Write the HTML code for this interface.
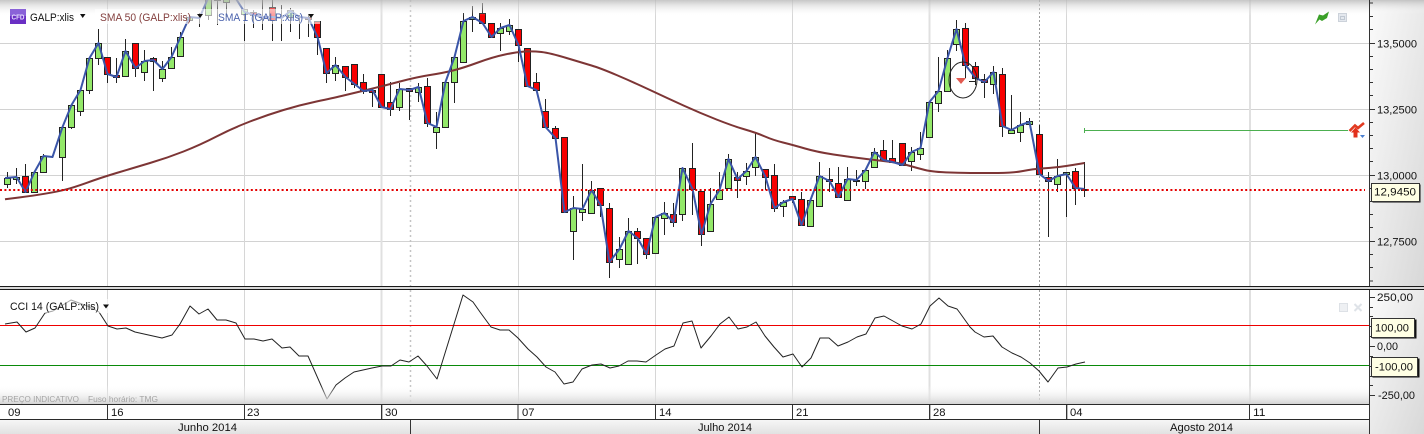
<!DOCTYPE html>
<html><head><meta charset="utf-8"><style>
html,body{margin:0;padding:0;background:#fff}
svg{display:block;filter:blur(.35px)}
text{font-family:"Liberation Sans",sans-serif;font-size:11px;fill:#111}
</style></head><body>
<svg width="1424" height="434" viewBox="0 0 1424 434" xmlns="http://www.w3.org/2000/svg">
<defs>
<linearGradient id="top" x1="0" y1="0" x2="0" y2="1"><stop offset="0" stop-color="#b8b8b8" stop-opacity=".8"/><stop offset="1" stop-color="#fff" stop-opacity="0"/></linearGradient>
<linearGradient id="bot" x1="0" y1="0" x2="0" y2="1"><stop offset="0" stop-color="#fff" stop-opacity="0"/><stop offset="1" stop-color="#d4d4d4"/></linearGradient>
<linearGradient id="axis" x1="0" y1="0" x2="1" y2="1"><stop offset="0" stop-color="#fbfbfb"/><stop offset="1" stop-color="#d8d8d8"/></linearGradient>
<linearGradient id="mon" x1="0" y1="0" x2="0" y2="1"><stop offset="0" stop-color="#f6f6f6"/><stop offset="1" stop-color="#e2e2e2"/></linearGradient>
</defs>
<rect width="1424" height="434" fill="#fff"/>
<!-- grid -->
<path d="M0 43.5H1369M0 109.5H1369M0 175.5H1369M0 241.5H1369" stroke="#d2d2d2" fill="none"/>
<path d="M107.5 0V286M244.5 0V286M518.5 0V286M655.5 0V286M792.5 0V286M1066.5 0V286M107.5 290V405M244.5 290V405M518.5 290V405M655.5 290V405M792.5 290V405M1066.5 290V405" stroke="#d6d6d6" fill="none"/>
<path d="M381.5 0V286M929.5 0V286M1250 0V286M381.5 290V405M929.5 290V405M1250 290V405" stroke="#e0e0e0" stroke-width="2" fill="none"/>
<path d="M410.5 0V286M410.5 290V404" stroke="#c4c4c4" stroke-width="1.5" stroke-dasharray="2 3" fill="none"/>
<path d="M1039.5 0V286M1039.5 290V404" stroke="#999" stroke-dasharray="2 2" fill="none"/>
<!-- wicks -->
<path stroke="#222" fill="none" d="M7.5 172V188M16.5 168V184M25.5 164V192M43.5 154V172M52.5 155V158M62.5 127V181M71.5 105V129M80.5 90V116M89.5 58V94M98.5 29V65M107.5 57V83M116.5 58V83M125.5 39V76M135.5 43V77M144.5 50V81M153.5 57V91M162.5 61V82M171.5 47V68M180.5 32V56M189.5 15V22M199.5 13V27M208.5 0V20M217.5 0V25M226.5 0V17M244.5 9V41M253.5 10V28M262.5 0V30M272.5 0V41M281.5 5V41M290.5 8V32M299.5 15V39M308.5 15V37M317.5 21V55M326.5 48V83M335.5 57V81M345.5 66V91M354.5 64V88M363.5 74V94M372.5 90V107M390.5 82V116M399.5 83V111M409.5 88V120M418.5 83V102M427.5 78V127M436.5 112V149M454.5 57V103M463.5 13V62M472.5 6V32M482.5 3V23M491.5 23V37M500.5 23V51M509.5 19V35M518.5 29V62M536.5 73V90M545.5 99V127M555.5 126V138M573.5 196V260M582.5 164V221M591.5 181V214M600.5 188V217M609.5 203V278M619.5 237V268M628.5 218V264M637.5 228V264M646.5 238V259M664.5 202V235M673.5 203V227M682.5 168V221M692.5 143V215M701.5 191V246M710.5 188V231M719.5 172V199M728.5 154V188M737.5 172V198M746.5 163V185M755.5 132V176M765.5 169V190M774.5 164V212M783.5 200V217M792.5 196V203M801.5 192V225M819.5 162V206M829.5 168V192M838.5 167V197M847.5 167V200M856.5 170V186M865.5 170V189M874.5 148V168M883.5 140V160M892.5 140V162M902.5 143V165M911.5 147V171M920.5 132V160M929.5 102V137M938.5 57V112M947.5 50V91M956.5 20V51M965.5 23V78M975.5 62V78M984.5 74V98M993.5 66V94M1002.5 68V137M1011.5 95V133M1020.5 112V142M1029.5 118V125M1039.5 125V174M1048.5 172V237M1057.5 159V192M1066.5 172V217M1075.5 168V205M1084.5 162V197M1081 189.5H1088"/>
<!-- green bodies -->
<path fill="#93e869" stroke="#222" d="M4.5 178.5h6v6h-6zM13.5 177.5h6v2h-6zM31.5 172.5h6v20h-6zM40.5 156.5h6v16h-6zM59.5 127.5h6v30h-6zM68.5 105.5h6v22h-6zM77.5 90.5h6v21h-6zM86.5 58.5h6v32h-6zM95.5 43.5h6v15h-6zM122.5 51.5h6v25h-6zM141.5 61.5h6v11h-6zM159.5 69.5h6v9h-6zM168.5 57.5h6v11h-6zM177.5 37.5h6v19h-6zM186.5 17.5h6v3h-6zM205.5 -5.5h6v21h-6zM223.5 -5.5h6v8h-6zM241.5 9.5h6v5h-6zM287.5 10.5h6v7h-6zM332.5 65.5h6v8h-6zM396.5 89.5h6v18h-6zM415.5 87.5h6v5h-6zM433.5 127.5h6v5h-6zM442.5 82.5h6v45h-6zM451.5 57.5h6v25h-6zM460.5 21.5h6v41h-6zM469.5 17.5h6v2h-6zM497.5 28.5h6v5h-6zM506.5 25.5h6v6h-6zM570.5 208.5h6v23h-6zM579.5 209.5h6v3h-6zM588.5 190.5h6v23h-6zM616.5 249.5h6v10h-6zM625.5 231.5h6v33h-6zM652.5 217.5h6v36h-6zM661.5 213.5h6v5h-6zM679.5 168.5h6v46h-6zM707.5 204.5h6v27h-6zM716.5 190.5h6v9h-6zM725.5 159.5h6v29h-6zM743.5 171.5h6v5h-6zM752.5 157.5h6v10h-6zM780.5 202.5h6v4h-6zM807.5 200.5h6v26h-6zM816.5 176.5h6v30h-6zM844.5 179.5h6v21h-6zM853.5 180.5h6v1h-6zM862.5 170.5h6v11h-6zM871.5 152.5h6v15h-6zM908.5 152.5h6v9h-6zM917.5 148.5h6v6h-6zM926.5 102.5h6v35h-6zM935.5 91.5h6v12h-6zM944.5 58.5h6v33h-6zM953.5 29.5h6v15h-6zM990.5 72.5h6v12h-6zM1008.5 130.5h6v3h-6zM1017.5 125.5h6v7h-6zM1026.5 121.5h6v3h-6zM1054.5 176.5h6v8h-6zM1063.5 172.5h6v2h-6zM1081.5 189.5h6v1h-6z"/>
<!-- red bodies -->
<path fill="#f70000" stroke="#222" d="M22.5 176.5h6v16h-6zM104.5 57.5h6v17h-6zM113.5 75.5h6v2h-6zM132.5 43.5h6v25h-6zM150.5 58.5h6v3h-6zM214.5 -5.5h6v6h-6zM250.5 12.5h6v3h-6zM269.5 7.5h6v13h-6zM305.5 17.5h6v2h-6zM314.5 21.5h6v16h-6zM323.5 48.5h6v25h-6zM342.5 66.5h6v11h-6zM351.5 64.5h6v20h-6zM360.5 82.5h6v9h-6zM369.5 90.5h6v2h-6zM378.5 74.5h6v33h-6zM387.5 102.5h6v7h-6zM406.5 88.5h6v3h-6zM424.5 86.5h6v37h-6zM479.5 13.5h6v10h-6zM488.5 23.5h6v14h-6zM515.5 29.5h6v16h-6zM524.5 48.5h6v38h-6zM533.5 82.5h6v8h-6zM542.5 111.5h6v16h-6zM552.5 128.5h6v10h-6zM561.5 137.5h6v75h-6zM597.5 188.5h6v17h-6zM606.5 208.5h6v54h-6zM634.5 231.5h6v7h-6zM643.5 238.5h6v16h-6zM670.5 214.5h6v8h-6zM689.5 168.5h6v21h-6zM698.5 191.5h6v43h-6zM734.5 177.5h6v3h-6zM762.5 169.5h6v8h-6zM771.5 175.5h6v33h-6zM789.5 196.5h6v3h-6zM798.5 199.5h6v26h-6zM826.5 179.5h6v2h-6zM835.5 183.5h6v14h-6zM880.5 150.5h6v10h-6zM889.5 158.5h6v4h-6zM899.5 143.5h6v22h-6zM962.5 28.5h6v37h-6zM972.5 66.5h6v12h-6zM981.5 79.5h6v3h-6zM999.5 74.5h6v52h-6zM1036.5 134.5h6v40h-6zM1045.5 177.5h6v4h-6zM1072.5 171.5h6v17h-6z"/>
<!-- SMA 50 -->
<path fill="none" stroke="#7d3535" stroke-width="2" stroke-linejoin="round" d="M5 199.3L19 197.5Q33 195.7 45 193.7Q57 191.7 65 189.7Q73 187.7 86.5 182.9Q100 178 116.5 173Q133 168 150 163Q167 158 183.5 151.5Q200 145 216.5 136.5Q233 128 250 121.5Q267 115 283.5 110Q300 105 316.5 101.5Q333 98 341.5 96Q350 94 366.5 90Q383 86 400 81.5Q417 77 430 75Q443 73 453 70.5Q463 68 478 62.5Q493 57 505 54.5Q517 52 525 51.5Q533 51 541.5 52Q550 53 566.5 58Q583 63 591.5 65.5Q600 68 616.5 75Q633 82 650 90Q667 98 683.5 105.5Q700 113 716.5 119.5Q733 126 745 129.5Q757 133 765 136.5Q773 140 783 142.5Q793 145 805 148.5Q817 152 833.5 154.5Q850 157 866.5 159Q883 161 891.5 162Q900 163 908.5 165.5Q917 168 925 170Q933 172 950 172.5Q967 173 975 173Q983 173 998 173Q1013 173 1023 171Q1033 169 1041.5 168.5Q1050 168 1058.5 167Q1067 166 1084.5 163"/>
<!-- SMA 1 -->
<path fill="none" stroke="#3a55a8" stroke-width="2" stroke-linejoin="round" d="M5 178L16.5 177L25.5 192L34.5 172L43.5 156L52.5 157L62.5 127L71.5 105L80.5 90L89.5 58L98.5 43L107.5 74L116.5 77L125.5 51L135.5 68L144.5 61L153.5 60L162.5 69L171.5 57L180.5 37L189.5 17L199.5 18L208.5 -3L217.5 -5L226.5 -8L235.5 -2L244.5 12L253.5 15L262.5 17L272.5 17L281.5 18L290.5 11L299.5 17L308.5 18L317.5 37L326.5 73L335.5 65L345.5 77L354.5 84L363.5 91L372.5 90L381.5 107L390.5 109L399.5 89L409.5 90L418.5 87L427.5 123L436.5 127L445.5 82L454.5 57L463.5 21L472.5 17L482.5 23L491.5 37L500.5 28L509.5 25L518.5 45L527.5 86L536.5 90L545.5 127L555.5 138L564.5 212L573.5 208L582.5 209L591.5 190L600.5 205L609.5 262L619.5 249L628.5 231L637.5 238L646.5 254L655.5 217L664.5 213L673.5 222L682.5 168L692.5 189L701.5 234L710.5 204L719.5 190L728.5 159L737.5 179L746.5 171L755.5 157L765.5 177L774.5 208L783.5 202L792.5 199L801.5 225L810.5 200L819.5 176L829.5 181L838.5 197L847.5 179L856.5 180L865.5 170L874.5 152L883.5 160L892.5 162L902.5 165L911.5 152L920.5 148L929.5 102L938.5 91L947.5 58L956.5 29L965.5 65L975.5 78L984.5 82L993.5 72L1002.5 126L1011.5 130L1020.5 125L1029.5 122L1039.5 174L1048.5 181L1057.5 176L1066.5 174L1075.5 188L1084.5 189"/>
<!-- circle marker -->
<ellipse cx="963" cy="80" rx="14" ry="18" fill="none" stroke="#222"/>
<path d="M956 78H966L961 84Z" fill="#e25a50"/>
<path d="M969 81.5H975.5M975.5 77V85" stroke="#222" fill="none"/>
<!-- price line -->
<path d="M0 190H1365" stroke="#e40000" stroke-width="2" stroke-dasharray="2 2.4" fill="none"/>
<!-- green alert -->
<path d="M1084.5 130.5H1348M1084.5 128V133" stroke="#4caf50" fill="none"/>
<!-- red icon -->
<path d="M1349.5 131L1355 125.5L1358 128L1364 123" fill="none" stroke="#e23a20" stroke-width="2.6"/>
<path d="M1351 132.5L1355.5 127.5L1360 132.5H1357.5V137.5H1353.5V132.5Z" fill="#e2301c"/>
<path d="M1360 135H1365L1362.5 138Z" fill="#4a7fd0"/>
<!-- top fade + label backings -->
<rect x="0" y="0" width="1369" height="16" fill="url(#top)"/>
<rect x="95" y="9" width="225" height="15" fill="#fff" fill-opacity=".6"/>
<!-- CFD icon -->
<rect x="10" y="9" width="16" height="15" fill="#6a2fc4"/>
<rect x="10" y="9" width="16" height="7" fill="#8a62d8"/>
<text x="11.5" y="19.5" style="font-size:7px;font-weight:bold;fill:#e8e0ff" textLength="13" lengthAdjust="spacingAndGlyphs">CFD</text>
<text x="30" y="21" textLength="44" lengthAdjust="spacingAndGlyphs">GALP:xlis</text>
<path d="M80 14H85.5L82.7 18Z" fill="#111"/>
<text x="100" y="21" style="fill:#84403f" textLength="91" lengthAdjust="spacingAndGlyphs">SMA 50 (GALP:xlis)</text>
<path d="M197 14H203L200 18Z" fill="#111"/>
<text x="218" y="21" style="fill:#4a62ad" textLength="85" lengthAdjust="spacingAndGlyphs">SMA 1 (GALP:xlis)</text>
<path d="M308 14H314L311 18Z" fill="#111"/>
<!-- green arrow icon top right -->
<path d="M1315 24.5L1319 14.5L1323 15.5L1329 11.5L1327 18L1322 21L1319.5 19.5Z" fill="#3aa028"/>
<rect x="1338.5" y="13.5" width="8" height="8" fill="#e4e8ee" stroke="#ccd2da"/>
<rect x="1340.5" y="16.5" width="4" height="3" fill="none" stroke="#c0c8d2"/>
<!-- lower pane -->
<path d="M0 325.5H1369" stroke="#ee0000" fill="none"/>
<path d="M0 365.5H1369" stroke="#0a8a0a" fill="none"/>
<path fill="none" stroke="#222" stroke-linejoin="round" d="M5 324L17 322L26 332L35 328L45 313L53 311L71 300L90 307L99 312L108 326L117 329L126 328L135 332L144 334L153 336L162 338L172 335L180 324L190 306L199 314L208 309L217 320L226 320L236 323L245 339L254 339L263 341L272 339L282 348L290 347L299 356L308 356L327 399L336 385L345 378L354 372L363 370L372 368L382 366L391 366L400 360L409 362L418 356L427 366L437 379L463 295L473 302L480 312L491 327L500 330L509 330L518 338L528 349L537 357L546 367L555 372L564 384L573 382L582 369L592 365L601 364L610 368L619 366L628 361L637 361L646 362L656 355L665 349L674 346L683 323L692 321L701 348L711 336L720 324L729 317L738 329L747 327L756 322L765 336L774 347L783 357L793 354L802 367L811 358L820 338L829 338L838 346L848 342L857 337L866 334L875 318L884 316L893 321L902 326L912 329L921 324L930 306L939 298L948 306L957 309L960 313L970 327L975 332L984 337L993 336L1002 347L1012 353L1021 357L1030 363L1039 371L1048 382L1058 368L1067 367L1076 364L1085 362"/>
<rect x="8" y="299" width="102" height="14" fill="#fff" fill-opacity=".6"/>
<text x="10" y="310" textLength="89" lengthAdjust="spacingAndGlyphs">CCI 14 (GALP:xlis)</text>
<path d="M103 304.5H109L106 308.5Z" fill="#111"/>
<rect x="1339.5" y="303.5" width="8" height="8" fill="#eef0f3" stroke="#dde1e6"/>
<path d="M1354.5 304L1361.5 311M1361.5 304L1354.5 311" stroke="#dfe3e8" stroke-width="2" fill="none"/>
<rect x="0" y="385" width="1369" height="19" fill="url(#bot)"/>
<text x="2" y="402" style="font-size:8.5px;fill:#a4a4a4" textLength="77" lengthAdjust="spacingAndGlyphs">PREÇO INDICATIVO</text>
<text x="88" y="402" style="font-size:8.5px;fill:#a4a4a4" textLength="70" lengthAdjust="spacingAndGlyphs">Fuso horário: TMG</text>
<!-- time axis -->
<rect x="0" y="405" width="1369" height="14" fill="#fff"/>
<path d="M107.5 405V419M244.5 405V419M381.5 405V419M518 405V419M655.5 405V419M792.5 405V419M929.5 405V419M1066.5 405V419M1249.5 405V419" stroke="#333" fill="none"/>
<path d="M1066.5 405V419M929.5 405V419M381.5 405V419" stroke="#bbb" transform="translate(1 0)" fill="none"/>
<text x="8" y="416" textLength="12.5" lengthAdjust="spacingAndGlyphs">09</text>
<text x="111" y="416" textLength="12.5" lengthAdjust="spacingAndGlyphs">16</text>
<text x="247" y="416" textLength="12.5" lengthAdjust="spacingAndGlyphs">23</text>
<text x="385" y="416" textLength="12.5" lengthAdjust="spacingAndGlyphs">30</text>
<text x="522" y="416" textLength="12.5" lengthAdjust="spacingAndGlyphs">07</text>
<text x="659" y="416" textLength="12.5" lengthAdjust="spacingAndGlyphs">14</text>
<text x="796" y="416" textLength="12.5" lengthAdjust="spacingAndGlyphs">21</text>
<text x="933" y="416" textLength="12.5" lengthAdjust="spacingAndGlyphs">28</text>
<text x="1070" y="416" textLength="12.5" lengthAdjust="spacingAndGlyphs">04</text>
<text x="1253" y="416" textLength="12.5" lengthAdjust="spacingAndGlyphs">11</text>
<!-- months -->
<rect x="0" y="420" width="1424" height="14" fill="url(#mon)"/>
<path d="M410.5 420V434M1039.5 420V434" stroke="#333" fill="none"/>
<text x="178" y="431" textLength="59" lengthAdjust="spacingAndGlyphs">Junho 2014</text>
<text x="698" y="431" textLength="54" lengthAdjust="spacingAndGlyphs">Julho 2014</text>
<text x="1170" y="431" textLength="63" lengthAdjust="spacingAndGlyphs">Agosto 2014</text>
<!-- right axis -->
<rect x="1370" y="0" width="54" height="286" fill="url(#axis)"/>
<rect x="1370" y="290" width="54" height="144" fill="url(#axis)"/>
<rect x="1370" y="0" width="54" height="14" fill="url(#top)"/>
<path d="M0 404.5H1369.5M0 419.5H1369.5" stroke="#2a2a2a" fill="none"/>
<path d="M1369.5 0V434" stroke="#333" fill="none"/>
<!-- divider -->
<rect x="0" y="286" width="1424" height="4" fill="#d8d8d8"/>
<path d="M0 286.5H1424M0 289.5H1424" stroke="#1a1a1a" fill="none"/>
<!-- ticks -->
<path stroke="#333" fill="none" d="M1370 3H1373M1370 16.5H1373M1370 29.5H1373M1370 56.5H1373M1370 69.5H1373M1370 82.5H1373M1370 95.5H1373M1370 122.5H1373M1370 135.5H1373M1370 148.5H1373M1370 161.5H1373M1370 188.5H1373M1370 201.5H1373M1370 214.5H1373M1370 227.5H1373M1370 254.5H1373M1370 267.5H1373M1370 281H1373M1370 43.5H1375M1370 109.5H1375M1370 175.5H1375M1370 241.5H1375M1370 297.5H1375M1370 307.5H1373M1370 316.5H1373M1370 326.5H1375M1370 336.5H1373M1370 346.5H1375M1370 356.5H1373M1370 366.5H1375M1370 376.5H1373M1370 385.5H1373M1370 395.5H1375"/>
<text x="1377" y="47.5" textLength="40" lengthAdjust="spacingAndGlyphs">13,5000</text>
<text x="1377" y="113.5" textLength="40" lengthAdjust="spacingAndGlyphs">13,2500</text>
<text x="1377" y="179.5" textLength="40" lengthAdjust="spacingAndGlyphs">13,0000</text>
<text x="1377" y="245.5" textLength="40" lengthAdjust="spacingAndGlyphs">12,7500</text>
<!-- price tag -->
<rect x="1372.5" y="184.5" width="48" height="18" fill="#111"/>
<rect x="1371.5" y="183.5" width="48" height="18" fill="#ffffe4" stroke="#333"/>
<text x="1374" y="195.5" textLength="42" lengthAdjust="spacingAndGlyphs">12,9450</text>
<text x="1377" y="301" textLength="36" lengthAdjust="spacingAndGlyphs">250,00</text>
<rect x="1372.5" y="319.5" width="44" height="19" fill="#111"/>
<rect x="1371.5" y="318.5" width="43" height="19" fill="#ffffe4" stroke="#333"/>
<text x="1375" y="331.5" textLength="34" lengthAdjust="spacingAndGlyphs">100,00</text>
<text x="1377" y="350" textLength="21" lengthAdjust="spacingAndGlyphs">0,00</text>
<rect x="1372.5" y="358.5" width="47" height="19" fill="#111"/>
<rect x="1371.5" y="357.5" width="46" height="19" fill="#ffffe4" stroke="#333"/>
<text x="1375" y="370.5" textLength="38" lengthAdjust="spacingAndGlyphs">-100,00</text>
<text x="1378" y="399" textLength="37" lengthAdjust="spacingAndGlyphs">-250,00</text>
</svg>
</body></html>
